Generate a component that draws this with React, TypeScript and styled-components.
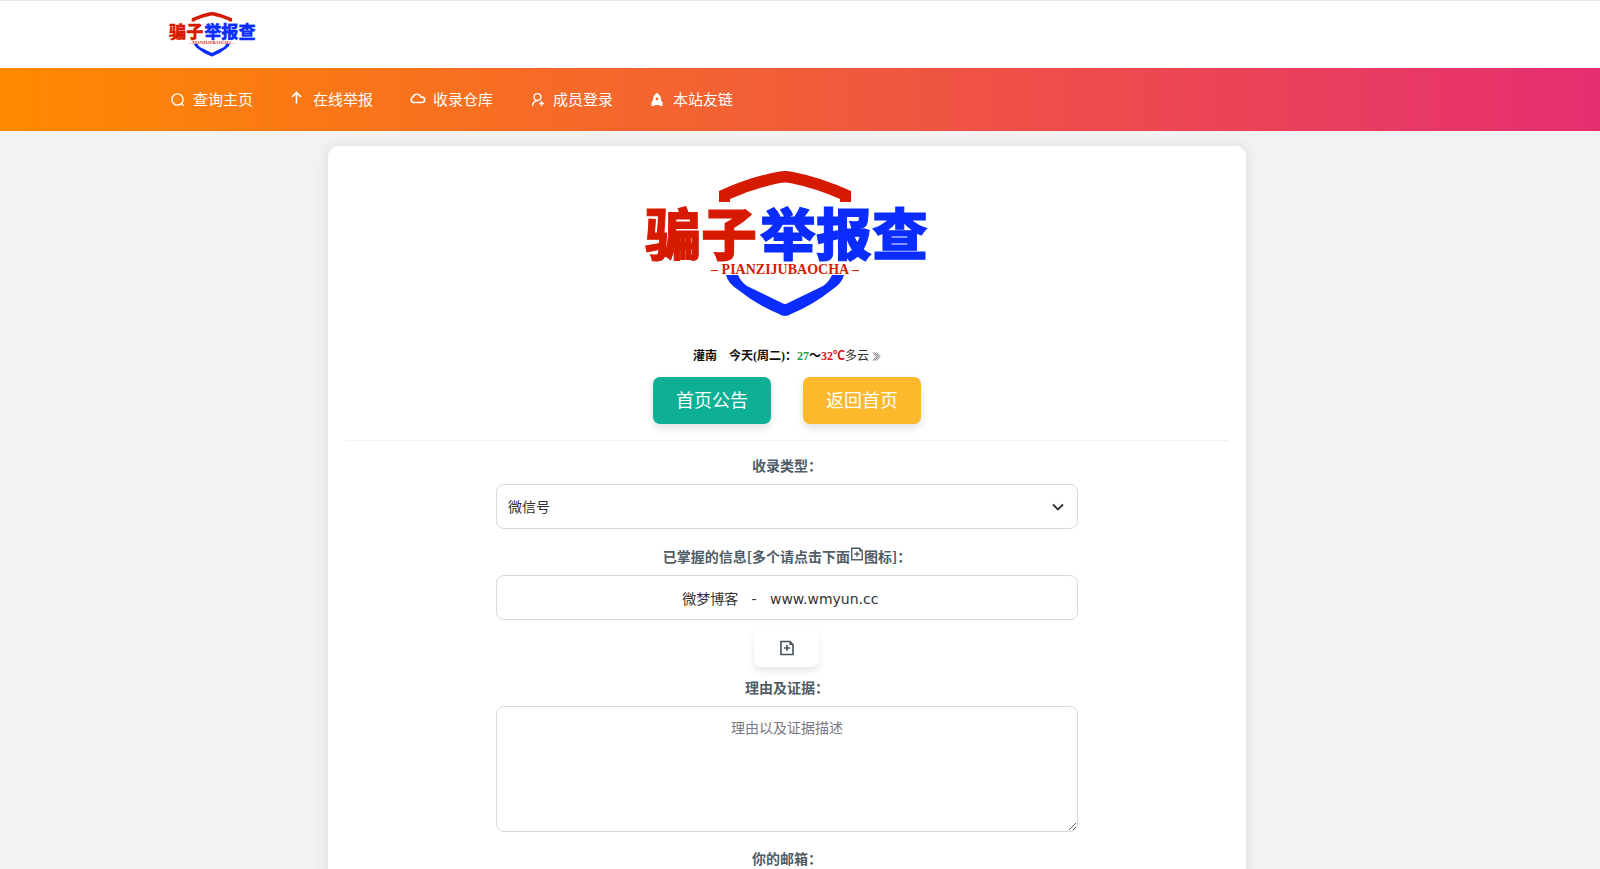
import React from "react";
import styled, { createGlobalStyle, css } from "styled-components";

const GlobalStyle = createGlobalStyle`
  *, *::before, *::after { box-sizing: border-box; }
  body {
    margin: 0;
    background: #f2f2f2;
    color: #333;
    font-family: "Noto Sans CJK SC", "Noto Sans", sans-serif;
    font-size: 14px;
    line-height: 20px;
  }
`;

const Page = styled.div`
  height: 100vh;
  overflow-y: auto;
  scrollbar-width: none;
`;

const Header = styled.header`
  display: flex;
  align-items: center;
  height: 68px;
  padding: 0 169px;
  background: #fff;
  border-top: 1px solid #e6e6e6;
`;

const Nav = styled.nav`
  display: flex;
  align-items: center;
  gap: 37px;
  height: 63px;
  padding: 0 170px 2px;
  background: linear-gradient(90deg, #ff8a00, #e52e71);
`;

const NavLink = styled.a`
  display: flex;
  align-items: center;
  gap: 7px;
  color: #fff;
  font-size: 15px;
  text-decoration: none;
`;

const NavIcon = styled.svg`
  width: 16px;
  height: 16px;
`;

const Main = styled.main`
  display: flex;
  justify-content: center;
  padding: 15px 26px 40px 0;
`;

const Card = styled.section`
  display: flex;
  flex-direction: column;
  align-items: center;
  width: 60%;
  min-width: 640px;
  max-width: 918px;
  padding: 25px 18px 40px;
  background: #fff;
  border-radius: 10px;
  box-shadow: 0 0 14px rgba(0, 0, 0, 0.1);
`;

const LogoDrawing = styled.svg<{ $width: number }>`
  display: block;
  width: ${(p) => p.$width}px;
  height: auto;
`;

const Weather = styled.p`
  display: flex;
  align-items: center;
  margin: 29px 0 11px;
  color: #111;
  font-family: "Liberation Serif", "Noto Sans CJK SC", serif;
  font-size: 12px;
  font-weight: 700;
  white-space: pre;
`;

const Low = styled.span`color: #1ca050;`;
const High = styled.span`color: #d8141c;`;
const Sky = styled.span`font-weight: 400; color: #333;`;

const Actions = styled.div`
  display: flex;
  gap: 32px;
`;

const ActionButton = styled.button<{ $color: string }>`
  height: 47px;
  padding: 0 23px 4px;
  border: 0;
  border-radius: 7px;
  background: ${(p) => p.$color};
  color: #fff;
  font: 18px/26px "Noto Sans CJK SC", sans-serif;
  box-shadow: 0 4px 8px rgba(0, 0, 0, 0.12);
`;

const Divider = styled.hr`
  width: 100%;
  margin: 16px 0 0;
  border: 0;
  border-top: 1px solid #f2f2f2;
`;

const Form = styled.form`
  display: flex;
  flex-direction: column;
  align-items: center;
  width: 66%;
  padding-top: 14px;
`;

const Label = styled.label`
  display: flex;
  align-items: center;
  margin-bottom: 9px;
  color: #4f5d66;
  font-weight: 700;
`;

const field = css`
  display: block;
  width: 100%;
  margin: 0 0 17px;
  border: 1px solid #d9dadc;
  border-radius: 8px;
  background: #fff;
  color: #333;
  font: 14px/20px "DejaVu Sans", "Noto Sans CJK SC", sans-serif;
`;

const SelectBox = styled.div`
  display: grid;
  width: 100%;
  align-items: center;
  margin-bottom: 17px;

  > * { grid-area: 1 / 1; }
`;

const Select = styled.select`
  ${field}
  height: 45px;
  margin: 0;
  padding: 0 11px;
  appearance: none;
`;

const Chevron = styled.svg`
  justify-self: end;
  width: 12px;
  height: 12px;
  margin-right: 14px;
  pointer-events: none;
`;

const Input = styled.input`
  ${field}
  height: 45px;
  padding: 0 12px;
  text-align: center;
`;

const TextArea = styled.textarea`
  ${field}
  height: 126px;
  margin-bottom: 16px;
  padding: 11px;
  text-align: center;
  resize: vertical;

  &::placeholder { color: #787885; }
`;

const AddButton = styled.button`
  display: flex;
  align-items: center;
  justify-content: center;
  width: 65px;
  height: 38px;
  margin: -8px 0 10px;
  border: 0;
  border-radius: 7px;
  background: #fff;
  color: #45525c;
  box-shadow: 0 4px 7px rgba(0, 0, 0, 0.1);
`;

const FileIcon = styled.svg<{ $raised?: boolean }>`
  width: 16px;
  height: 16px;
  ${(p) => p.$raised && "width: 14px; height: 14px; margin-bottom: 4px;"}
`;

const Logo = ({ width }: { width: number }) => (
  <LogoDrawing $width={width} viewBox="0 0 284 146" role="img" aria-label="骗子举报查">
    <path d="M74 31V20Q105 6 132 1Q140 -1 148 1Q175 6 206 20V31H195V28Q170 17 145 12Q140 11 135 12Q110 17 85 28V31Z" fill="#d61a00" />
    <path d="M81 104H93Q96 111 102 115L137 132Q140 134 143 132L178 115Q184 111 187 104H199Q197 112 188 118Q168 134 146 143Q140 147 134 143Q112 134 92 118Q83 112 81 104Z" fill="#0a2cff" />
    <g fontFamily="'Noto Sans CJK SC', sans-serif" fontWeight="900" fontSize="56" strokeWidth="1">
      <text x="0" y="84" fill="#d61a00" stroke="#d61a00">骗子</text>
      <text x="115" y="84" fill="#0a2cff" stroke="#0a2cff">举报查</text>
    </g>
    <text x="140" y="103" textAnchor="middle" fill="#d61a00" fontFamily="'Liberation Serif', serif" fontWeight="700" fontSize="14">
      {"– PIANZIJUBAOCHA –"}
    </text>
  </LogoDrawing>
);

const AddFileIcon = ({ raised }: { raised?: boolean }) => (
  <FileIcon $raised={raised} viewBox="0 0 16 16" fill="none" stroke="currentColor" strokeWidth="1.6" aria-hidden="true">
    <path d="M2 1.5H11L14 4.5V14.5H2ZM8 5V11M5 8H11" />
    <path d="M10.5 1.5V5H14Z" fill="currentColor" stroke="none" />
  </FileIcon>
);

const navItems = [
  {
    text: "查询主页",
    icon: <><circle cx="7.5" cy="8.5" r="5.6" /><path d="M11.3 12.5L13.6 14.8" /></>,
  },
  {
    text: "在线举报",
    icon: <path d="M6.5 12.5V1.5M2 6L6.5 1.5L11 6" strokeWidth="1.6" />,
  },
  {
    text: "收录仓库",
    icon: <path d="M3.8 11.5H12A2.7 2.7 0 0 0 12 6.1H11A4.3 4.3 0 0 0 3 5.9A2.9 2.9 0 0 0 3.8 11.5Z" strokeWidth="1.6" />,
  },
  {
    text: "成员登录",
    icon: <><circle cx="7.5" cy="6" r="3.4" /><path d="M2.5 15C2.7 11.5 4.5 9.8 8 9.7M11.5 10V15M9 12.5H14" /></>,
  },
  {
    text: "本站友链",
    icon: <path fill="currentColor" fillRule="evenodd" stroke="none" d="M7 2C10 3.5 11 6 11 9L12.5 11.5V15H10L9 14H5L4 15H1.5V11.5L3 9C3 6 4 3.5 7 2ZM7 6.5A1.4 1.4 0 1 0 7 9.3A1.4 1.4 0 1 0 7 6.5Z" />,
  },
];

export default function App() {
  return (
    <Page>
      <GlobalStyle />
      <Header>
        <Logo width={87} />
      </Header>
      <Nav>
        {navItems.map((item) => (
          <NavLink href="#" key={item.text}>
            <NavIcon viewBox="0 0 16 16" fill="none" stroke="currentColor" strokeWidth="1.4" aria-hidden="true">
              {item.icon}
            </NavIcon>
            {item.text}
          </NavLink>
        ))}
      </Nav>
      <Main>
        <Card>
          <Logo width={284} />
          <Weather>
            灌南　今天(周二)：<Low>27</Low>～<High>32℃</High>
            <Sky>多云 </Sky>
            <svg width="9" height="9" viewBox="0 0 9 9" fill="none" stroke="#777" aria-hidden="true">
              <path d="M1 0.5L4.5 4.5L1 8.5M4.5 0.5L8 4.5L4.5 8.5M2.5 0.5L6 4.5L2.5 8.5" />
            </svg>
          </Weather>
          <Actions>
            <ActionButton type="button" $color="#0eb095">首页公告</ActionButton>
            <ActionButton type="button" $color="#fcb92c">返回首页</ActionButton>
          </Actions>
          <Divider />
          <Form>
            <Label htmlFor="kind">收录类型：</Label>
            <SelectBox>
              <Select id="kind">
                <option>微信号</option>
              </Select>
              <Chevron viewBox="0 0 12 12" fill="none" stroke="#333" strokeWidth="1.8" aria-hidden="true">
                <path d="M1 3.5L6 8.5L11 3.5" />
              </Chevron>
            </SelectBox>
            <Label htmlFor="info">
              已掌握的信息[多个请点击下面<AddFileIcon raised />图标]：
            </Label>
            <Input id="info" defaultValue={"微梦博客   -   www.wmyun.cc   "} />
            <AddButton type="button" aria-label="添加">
              <AddFileIcon />
            </AddButton>
            <Label htmlFor="reason">理由及证据：</Label>
            <TextArea id="reason" placeholder="理由以及证据描述" />
            <Label htmlFor="email">你的邮箱：</Label>
            <Input id="email" type="email" />
          </Form>
        </Card>
      </Main>
    </Page>
  );
}
